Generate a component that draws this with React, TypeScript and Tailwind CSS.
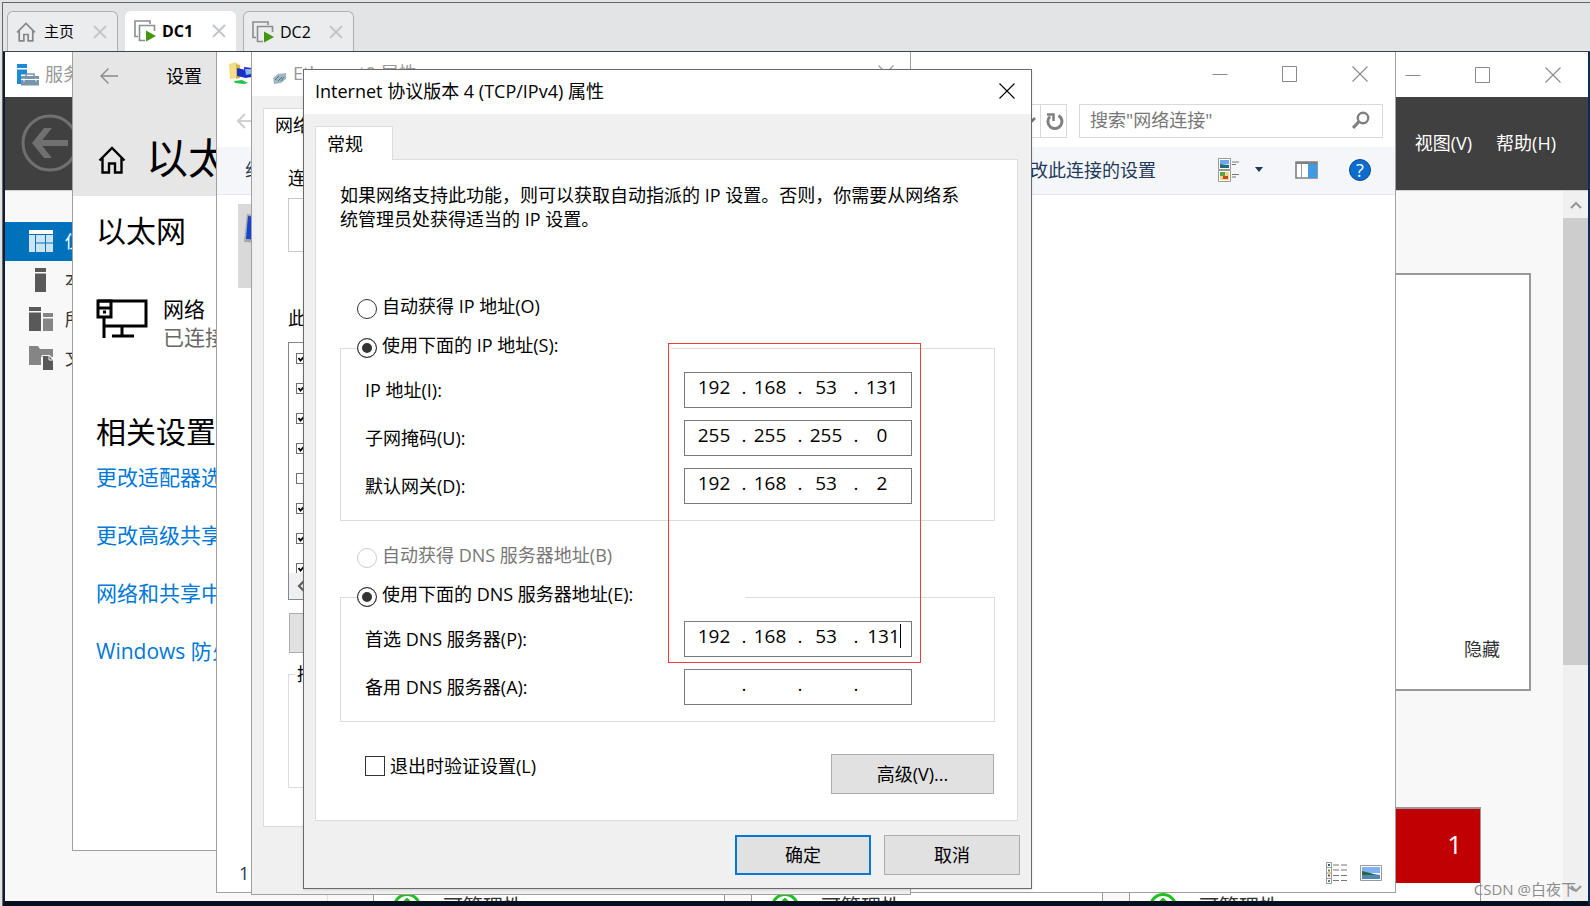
import React, { useState } from 'react';

const TABS = [
    { name: '主页', home: true },
    { name: 'DC1', active: true },
    { name: 'DC2' },
];

const SIDE_ITEMS = [
    { label: '仪表板', kind: 'dashboard' },
    { label: '本地服务器', kind: 'local' },
    { label: '所有服务器', kind: 'all' },
    { label: '文件和存储服务', kind: 'files' },
];

const SETTINGS_LINKS = ['更改适配器选项', '更改高级共享设置', '网络和共享中心', 'Windows 防火墙'];

const ROLE_TILES = [
    { id: 'adds', head: 'bg-white', count: '1' },
    { id: 'dns', head: 'bg-white', count: '1' },
    { id: 'local', head: 'bg-[#c00000]', count: '1' },
];

const ADAPTER_ITEMS = [true, true, true, true, false, true, true, true];

type IpRowProps = {
    id: string;
    label: string;
    value: string[];
    focused?: boolean;
};

function HomeIcon({ className }: { className: string }) {
    return (
        <svg viewBox="0 0 28 28" className={className} fill="none" stroke="currentColor" strokeWidth="2.4">
            <path d="M1.5 14.5 14 2l12.500 12.500M4.500 12v14.500H11v-9h6v9h6.500V12" />
        </svg>
    );
}

function CloseIcon({ className = 'size-4' }: { className?: string }) {
    return (
        <svg viewBox="0 0 16 16" className={className} fill="none" stroke="currentColor" strokeWidth="1.1">
            <path d="M.5.5l15 15M15.500.5l-15 15" />
        </svg>
    );
}

function VmIcon() {
    return (
        <svg viewBox="0 0 22 22" className="size-[22px]" fill="none">
            <path d="M4 16.500H1V1h15v3" stroke="#8b8e90" strokeWidth="1.6" />
            <path d="M11 20.500H5.500V5.500h15V11" stroke="#8b8e90" strokeWidth="1.6" />
            <path d="M12 10.500v11l10-5.500z" fill="#43960f" />
        </svg>
    );
}

function SideIcon({ kind }: { kind: string }) {
    return (
        <svg viewBox="0 0 24 24" className="size-6 shrink-0">
            {kind === 'dashboard' && (
                <>
                    <path d="M0 1h24v4H0z" fill="#fff" />
                    <path d="M0 6h6v17H0zM7 6h9v7.500H7zM17 6h7v7.500h-7zM7 14.500h9V23H7zM17 14.500h7V23h-7z" fill="#cce4f4" />
                </>
            )}
            {kind === 'local' && <path d="M6 0h11v4H6zM6 5.500h11V24H6z" fill="#595959" />}
            {kind === 'all' && (
                <>
                    <path d="M0 0h12v4H0zM0 5.500h12V24H0z" fill="#595959" />
                    <path d="M14 6h10v4H14zM14 11.500h10V24H14z" fill="#858585" />
                </>
            )}
            {kind === 'files' && (
                <>
                    <path d="M0 0h9l2 3h13v8H12v8H0z" fill="#858585" />
                    <path d="M14 10h6l4 4v10H14z" fill="#595959" />
                    <path d="M13 24V9.500h8l3 4M20 10v4h4" fill="none" stroke="#f8f8f8" />
                </>
            )}
        </svg>
    );
}

function WindowControls({ cell }: { cell: string }) {
    return (
        <div className="ml-auto flex h-full text-[#8a8a8a]">
            <button aria-label="最小化" className={`${cell} flex items-center justify-center`}>
                <svg viewBox="0 0 16 16" className="size-4"><path d="M.5 8.500h15" stroke="currentColor" /></svg>
            </button>
            <button aria-label="最大化" className={`${cell} flex items-center justify-center`}>
                <svg viewBox="0 0 16 16" className="size-4"><path d="M.5.5h14v15H.5z" fill="none" stroke="currentColor" /></svg>
            </button>
            <button aria-label="关闭" className={`${cell} flex items-center justify-center`}>
                <CloseIcon />
            </button>
        </div>
    );
}

function TabBar() {
    return (
        <nav className="flex h-[49px] shrink-0 items-end gap-[7px] border-b border-[#3c4650] bg-[#e3e4e6] pl-1">
            {TABS.map((tab) => (
                <div
                    key={tab.name}
                    className={`flex h-10 w-[111px] items-center rounded-t-md pr-2.5 text-base ${tab.active ? 'bg-white pl-[9px] font-bold' : 'border border-b-0 border-[#adb0b2] bg-[#ebecee] pl-2'}`}
                >
                    {tab.home ? <HomeIcon className="size-5 text-[#85888a]" /> : <VmIcon />}
                    <a href="#" className={tab.home ? 'ml-2 text-[15px]' : 'ml-1.5'}>{tab.name}</a>
                    <button aria-label={`关闭 ${tab.name}`} className="ml-auto text-[#c3c6c8]">
                        <svg viewBox="0 0 14 14" className="size-3.5" stroke="currentColor" strokeWidth="1.8">
                            <path d="M1 1l12 12M13 1 1 13" />
                        </svg>
                    </button>
                </div>
            ))}
        </nav>
    );
}

function ServerManager() {
    return (
        <section className="absolute inset-0 flex flex-col overflow-hidden bg-[#f8f8f8]">
            <header className="flex h-[45px] shrink-0 items-center bg-white pl-3">
                <svg viewBox="0 0 22 22" className="size-[22px]">
                    <path d="M0 0h10v4H0zM0 5.500h10v5H4V20H0z" fill="#1d8ad8" />
                    <path d="M9 12v-2h8v2" fill="none" stroke="#7795ab" strokeWidth="1.500" />
                    <path d="M4 12h18v9.500H4z" fill="#7795ab" />
                    <path d="M4 15.500h18M7 14.500v3M19 14.500v3" stroke="#fff" />
                </svg>
                <span className="ml-1.5 pb-0.5 text-[#999]">服务器管理器</span>
                <WindowControls cell="w-[70px]" />
            </header>
            <div className="flex h-[93px] shrink-0 items-center bg-[#404040] pr-8 pb-0.5 pl-4 text-white">
                <button aria-label="后退">
                    <svg viewBox="0 0 58 58" className="size-[58px]" fill="none" stroke="#707070">
                        <circle cx="29" cy="29" r="27" strokeWidth="3" />
                        <path d="M47 29H15" strokeWidth="6" />
                        <path d="M31 14h-8L11 29l12 15h8L19 29z" fill="#707070" stroke="none" />
                    </svg>
                </button>
                <a href="#" className="ml-auto">视图(V)</a>
                <a href="#" className="ml-6">帮助(H)</a>
            </div>
            <div className="flex min-h-0 flex-1 border-t border-[#d0d0d0]">
                <ul className="w-[323px] shrink-0 border-r border-[#e0e0e0] pt-[31px]">
                    {SIDE_ITEMS.map((item, i) => (
                        <li key={item.kind}>
                            <a href="#" className={`flex h-[39px] items-center pb-0.5 pl-6 ${i === 0 ? 'bg-[#0072bc] text-white' : 'text-[#333]'}`}>
                                <SideIcon kind={item.kind} />
                                <span className="ml-3">{item.label}</span>
                            </a>
                        </li>
                    ))}
                </ul>
                <main className="flex min-w-0 flex-1 flex-col pt-[82px] pl-[45px]">
                    <div className="mr-8 flex h-[418px] shrink-0 items-end justify-end border-2 border-[#999] bg-white pr-[29px] pb-7">
                        <a href="#" className="text-[#333]">隐藏</a>
                    </div>
                    <div className="mt-[116px] flex min-h-0 flex-1 gap-[26px] overflow-hidden">
                        {ROLE_TILES.map((tile) => (
                            <article key={tile.id} className="h-[200px] w-[352px] shrink-0 border border-t-2 border-[#999] bg-white">
                                <div className={`flex h-[74px] items-center justify-end pr-[18px] pb-1 text-[26px] text-white ${tile.head}`}>{tile.count}</div>
                                <div className="flex items-center pt-2.5 pl-[19px] text-xl text-[#333]">
                                    <svg viewBox="0 0 28 28" className="size-7" fill="none" stroke="#1fc01f" strokeWidth="3">
                                        <circle cx="14" cy="14" r="12.500" />
                                        <path d="M9 11.500l5-5 5 5M14 7v14" />
                                    </svg>
                                    <a href="#" className="ml-5.5">可管理性</a>
                                </div>
                            </article>
                        ))}
                    </div>
                </main>
                <div className="flex w-[25px] shrink-0 flex-col items-center bg-[#f0f0f0] text-[#999]">
                    <button aria-label="向上滚动" className="flex h-[27px] items-center">
                        <svg viewBox="0 0 12 8" className="h-2 w-3" fill="none" stroke="currentColor" strokeWidth="2.2"><path d="M1 7l5-5 5 5" /></svg>
                    </button>
                    <div className="h-[447px] w-full bg-[#cdcdcd]" />
                    <button aria-label="向下滚动" className="mt-auto flex h-6 items-center">
                        <svg viewBox="0 0 12 8" className="h-2 w-3" fill="none" stroke="currentColor" strokeWidth="2.2"><path d="M1 1l5 5 5-5" /></svg>
                    </button>
                </div>
            </div>
        </section>
    );
}

function SettingsWindow() {
    return (
        <section className="absolute top-0 left-[67px] h-[799px] w-[900px] border border-t-0 border-[#a0a0a0] bg-white text-black">
            <header className="h-36 bg-[#e6e6e6]">
                <div className="flex h-12 items-center pl-[27px]">
                    <button aria-label="返回" className="text-[#8a8a8a]">
                        <svg viewBox="0 0 18 16" className="h-4 w-[18px]" fill="none" stroke="currentColor" strokeWidth="1.3"><path d="M18 8H1M8.500.5 1 8l7.500 7.500" /></svg>
                    </button>
                    <span className="ml-12">设置</span>
                </div>
                <div className="flex items-center pt-7.5 pl-[25px]">
                    <HomeIcon className="size-7" />
                    <h1 className="ml-5 pb-1 text-[42px] leading-14">以太网</h1>
                </div>
            </header>
            <div className="pl-[23px]">
                <h2 className="pt-3.5 text-3xl leading-[42px]">以太网</h2>
                <div className="mt-[43px] flex items-start text-[21px] leading-7">
                    <svg viewBox="0 0 52 40" className="mt-1 h-10 w-[52px]" fill="none" stroke="#000" strokeWidth="3">
                        <path d="M2 2h48v25H9M26 27v9M16 37h22M8 18v21" />
                        <path d="M2 2h13v16H2zM2 9h13" />
                        <path d="M7 13h3" />
                    </svg>
                    <div className="ml-[15px]">
                        <p>网络</p>
                        <p className="text-[#666]">已连接</p>
                    </div>
                </div>
                <h2 className="mt-15 text-3xl leading-[42px]">相关设置</h2>
                <ul className="mt-[10px] flex flex-col gap-[30px] text-[21px] leading-7 text-[#0078d7]">
                    {SETTINGS_LINKS.map((link) => (
                        <li key={link}><a href="#">{link}</a></li>
                    ))}
                </ul>
            </div>
        </section>
    );
}

function NetworkConnections() {
    return (
        <section className="absolute top-0 right-[192px] bottom-2 left-[211px] flex flex-col border border-t-0 border-[#a0a0a0] bg-white">
            <header className="flex h-[43px] shrink-0 items-center pl-[11px]">
                <svg viewBox="0 0 24 24" className="size-6">
                    <path d="M1 2l7-2 2 2v14l-8 1z" fill="#f3dc8a" />
                    <path d="M8 2l4 1v13l-4 1z" fill="#d9b64d" />
                    <path d="M9 6l9 2v8L9 14zM16 5l8 1v9l-7 1z" fill="#1930c8" />
                    <path d="M17 7l6 0v5l-5 1z" fill="#8db4f5" />
                    <path d="M6 19l8-1 6 3-4 1-9-1z" fill="#27c24c" />
                </svg>
                <WindowControls cell="w-[70px]" />
            </header>
            <div className="mt-[9px] flex h-[34px] shrink-0 gap-3 pr-3 pl-[19px] text-[#777]">
                <button aria-label="后退" className="text-[#d0d0d0]">
                    <svg viewBox="0 0 18 16" className="h-4 w-[18px]" fill="none" stroke="currentColor" strokeWidth="2.2"><path d="M18 8H2M9 1 2 8l7 7" /></svg>
                </button>
                <div className="flex flex-1 items-center justify-end border border-[#d9d9d9]">
                    <svg viewBox="0 0 12 8" className="mr-1 h-2 w-3" fill="none" stroke="currentColor" strokeWidth="2.5"><path d="M1 1l5 5 5-5" /></svg>
                    <button aria-label="刷新" className="flex h-full w-[26px] items-center justify-center border-l border-[#d9d9d9] pl-0.5 text-[#808080]">
                        <svg viewBox="0 0 18 18" className="size-[18px]" fill="none" stroke="currentColor" strokeWidth="3">
                            <path d="M12.500 3.500a7 7 0 1 1-8.500 1" />
                            <path d="M1 2.500h6.500V9" strokeWidth="2.500" />
                        </svg>
                    </button>
                </div>
                <div className="flex w-[304px] items-center border border-[#d9d9d9] pr-3 pb-0.5 pl-2.5">
                    <input aria-label="搜索" placeholder='搜索"网络连接"' className="min-w-0 flex-1 outline-none placeholder:text-[#777]" />
                    <svg viewBox="0 0 18 18" className="size-[18px]" fill="none" stroke="#808080">
                        <circle cx="11" cy="7" r="5.200" strokeWidth="2.400" />
                        <path d="M7 10.500 1 17" strokeWidth="3.200" />
                    </svg>
                </div>
            </div>
            <div className="mt-[9px] flex h-12 shrink-0 items-center border-b border-[#e4e7eb] bg-[#f4f6f9] pr-6 pb-0.5 pl-7 text-[#1e395b]">
                <a href="#">组织</a>
                <a href="#" className="ml-auto">更改此连接的设置</a>
                <button aria-label="更改视图" className="ml-[62px] flex items-center">
                    <svg viewBox="0 0 21 24" className="h-6 w-[21px]" fill="none">
                        <path d="M.5.5h12v11H.5zM.5 12.500h12v11H.5z" fill="#fff" stroke="#999" />
                        <path d="M2 2h9v4H2z" fill="#69a9ee" />
                        <path d="M2 6l9 1v3H2z" fill="#256a7a" />
                        <path d="M2 14h9v8H2z" fill="#f6d77b" />
                        <path d="M2 14h5v4H2z" fill="#5ba54c" />
                        <path d="M5 18h5v3H5z" fill="#c8462f" />
                        <path d="M14 4h7M14 6.500h4M14 16.500h7M14 19h4" stroke="#777" />
                    </svg>
                    <svg viewBox="0 0 8 5" className="ml-4 h-[5px] w-2"><path d="M0 0h8L4 5z" fill="#1e395b" /></svg>
                </button>
                <button aria-label="预览窗格" className="ml-8">
                    <svg viewBox="0 0 23 18" className="h-[18px] w-[23px]">
                        <path d="M1 1h21v16H1z" fill="#fff" stroke="#808080" strokeWidth="1.600" />
                        <path d="M1 2h21" stroke="#808080" strokeWidth="2" />
                        <path d="M6.500 3v14" stroke="#999" />
                        <path d="M13 3h9v14h-9z" fill="#3f9be3" />
                    </svg>
                </button>
                <button aria-label="帮助" className="ml-[31px] flex size-[22px] items-center justify-center rounded-full border border-[#0a4a8c] bg-[#0a6cce] leading-5 text-white">?</button>
            </div>
            <div className="mt-[9px] ml-[21px] h-[84px] w-[300px] bg-[#d9d9d9] pt-2.5 pl-1.5">
                <svg viewBox="0 0 32 32" className="size-8">
                    <path d="M3 0l26 3v27L0 28z" fill="#a8a8a8" />
                    <path d="M4 2l23 3v21L2 25z" fill="#1545d0" />
                </svg>
            </div>
            <footer className="mt-auto flex h-9 items-center pr-[13px] pb-0.5 pl-[22px] text-[#1e395b]">
                <span>1 个项目</span>
                <button aria-label="详细信息" className="ml-auto">
                    <svg viewBox="0 0 22 22" className="size-[22px]" fill="none" stroke="#999">
                        <path d="M.5.5h5v21h-5zM.5 5.500h5M.5 11h5M.5 16.500h5" />
                        <path d="M7 3h6M15 3h6M7 8h6M15 8h6M7 13.500h6M15 13.500h6M7 18.500h6M15 18.500h6" stroke="#777" />
                        <path d="M2 3h2" stroke="#25617a" strokeWidth="2" />
                        <path d="M2 8.500h2" stroke="#7a8a20" strokeWidth="2" />
                        <path d="M2 13.500h2" stroke="#b04010" strokeWidth="2" />
                        <path d="M2 19h2" stroke="#5d86a0" strokeWidth="2" />
                    </svg>
                </button>
                <button aria-label="大图标" className="ml-3">
                    <svg viewBox="0 0 22 16" className="h-4 w-[22px]">
                        <path d="M.5.5h21v15H.5z" fill="#fff" stroke="#999" />
                        <path d="M2 2h18v6H2z" fill="#7fb2f2" />
                        <path d="M2 7l6 1 12 2v4H2z" fill="#4f86b8" />
                        <path d="M2 6l8 2 6 2H2z" fill="#2c6640" />
                    </svg>
                </button>
            </footer>
        </section>
    );
}

function EthernetProperties() {
    return (
        <section className="absolute top-0 left-[246px] flex h-[843px] w-[660px] flex-col border border-t-0 border-[#a0a0a0] bg-[#f0f0f0]">
            <header className="flex h-11 shrink-0 items-center bg-white pr-4 pb-0.5 pl-[21px] text-[#999]">
                <svg viewBox="0 0 14 12" className="mt-2.5 h-3 w-3.5">
                    <path d="M0 6l5-4 8-1v6l-5 4-7 1z" fill="#9fb8c4" />
                    <path d="M2 8l4-4M5 9l4-4M8 9l3-4" stroke="#4f6f80" />
                </svg>
                <span className="ml-1.5">Ethernet0 属性</span>
                <button aria-label="关闭属性" className="ml-auto"><CloseIcon /></button>
            </header>
            <div className="flex flex-col pt-3 pr-3 pl-[11px]">
                <div className="h-[34px] w-16 border border-b-0 border-[#dcdcdc] bg-white pt-1 pl-[11px]">网络</div>
                <div className="h-[685px] border border-t-0 border-[#dcdcdc] bg-white pt-6 pl-6">
                    <p>连接时使用:</p>
                    <div className="mt-2 h-[54px] border border-[#c8c8c8]" />
                    <p className="mt-[54px]">此连接使用下列项目:</p>
                    <div className="mt-3 flex h-[258px] flex-col border border-[#828790]">
                        <div className="flex flex-1 flex-col gap-[19px] overflow-hidden pt-2.5 pl-[7px]">
                            {ADAPTER_ITEMS.map((checked, i) => (
                                <span key={i} className="relative flex">
                                    <input type="checkbox" aria-label={`项目 ${i + 1}`} defaultChecked={checked} className="peer size-[11px] shrink-0 appearance-none border border-[#707070]" />
                                    <svg viewBox="0 0 11 11" className="absolute hidden size-[11px] peer-checked:block" fill="none" stroke="#000" strokeWidth="1.800"><path d="M2.500 5l2 2.500L8.500 3" /></svg>
                                </span>
                            ))}
                        </div>
                        <div className="flex h-[26px] items-center bg-[#f0f0f0] pl-2">
                            <svg viewBox="0 0 8 12" className="h-3 w-2" fill="none" stroke="#606060" strokeWidth="2.200"><path d="M7 1 2 6l5 5" /></svg>
                        </div>
                    </div>
                    <button className="mt-[13px] ml-px block h-10 w-40 border border-[#adadad] bg-[#e1e1e1]">安装</button>
                    <fieldset className="mt-[9px] h-[126px] border border-[#dcdcdc] pl-1.5">
                        <legend className="px-0.5">描述</legend>
                    </fieldset>
                </div>
            </div>
        </section>
    );
}

function IpRow({ id, label, value, focused }: IpRowProps) {
    return (
        <div className="flex h-9 items-center justify-between pr-[82px] pl-6">
            <label htmlFor={`${id}-0`}>{label}</label>
            <div className="flex h-9 w-[228px] border border-[#7a7a7a] bg-white pl-1.5 text-[19px] leading-7">
                {value.map((octet, i) => (
                    <React.Fragment key={i}>
                        {i > 0 && <span className="w-1.5 text-center">.</span>}
                        <span className="flex h-7 w-[50px] items-center justify-center pr-1">
                            <input id={`${id}-${i}`} aria-label={`${label} ${i + 1}`} defaultValue={octet} className="h-7 w-9 text-center outline-none" />
                            {focused && i === 3 && <span className="-mx-0.5 h-6 w-px bg-black" />}
                        </span>
                    </React.Fragment>
                ))}
            </div>
        </div>
    );
}

type ModeRadioProps = {
    group: string;
    label: string;
    checked: boolean;
    disabled?: boolean;
    onPick: () => void;
};

function ModeRadio({ group, label, checked, disabled, onPick }: ModeRadioProps) {
    return (
        <label className={`flex h-5 items-center gap-[5px] ${disabled ? 'text-[#777]' : ''}`}>
            <input
                type="radio"
                name={group}
                checked={checked}
                disabled={disabled}
                onChange={onPick}
                className="size-5 appearance-none rounded-full border border-[#333] bg-white checked:bg-[#333] checked:shadow-[inset_0_0_0_4px_#fff] disabled:border-[#ccc]"
            />
            <span className="pb-1.5 leading-[14px]">{label}</span>
        </label>
    );
}

function TcpIpDialog() {
    const [manualIp, setManualIp] = useState(true);

    return (
        <section className="absolute top-[17px] left-[298px] w-[729px] border border-[#6a6a6a] bg-[#f0f0f0] shadow-sm">
            <header className="flex h-11 items-center bg-white pr-4 pb-0.5 pl-[11px]">
                <h2>Internet 协议版本 4 (TCP/IPv4) 属性</h2>
                <button aria-label="关闭对话框" className="ml-auto"><CloseIcon /></button>
            </header>
            <div className="pt-3 pr-[13px] pl-[11px]">
                <button className="relative -mb-px block h-[34px] w-[78px] border border-b-0 border-[#dcdcdc] bg-white pl-[11px] text-left">常规</button>
                <div className="border border-[#dcdcdc] bg-white pt-[23px] pr-[22px] pb-[26px] pl-6">
                    <p className="max-w-[630px] leading-6">
                        如果网络支持此功能，则可以获取自动指派的 IP 设置。否则，你需要从网络系统管理员处获得适当的 IP 设置。
                    </p>
                    <div className="mt-17 pl-[17px]">
                        <ModeRadio group="ip" label="自动获得 IP 地址(O)" checked={!manualIp} onPick={() => setManualIp(false)} />
                    </div>
                    <fieldset className="mt-[19px] border border-[#dcdcdc] pb-4 pl-4">
                        <legend className="w-[314px]">
                            <ModeRadio group="ip" label="使用下面的 IP 地址(S):" checked={manualIp} onPick={() => setManualIp(true)} />
                        </legend>
                        <div className="-ml-4 flex flex-col gap-3 pt-3.5">
                            <IpRow id="ip" label="IP 地址(I):" value={['192', '168', '53', '131']} />
                            <IpRow id="mask" label="子网掩码(U):" value={['255', '255', '255', '0']} />
                            <IpRow id="gateway" label="默认网关(D):" value={['192', '168', '53', '2']} />
                        </div>
                    </fieldset>
                    <div className="mt-[27px] pl-[17px]">
                        <ModeRadio group="dns" label="自动获得 DNS 服务器地址(B)" checked={false} disabled onPick={() => {}} />
                    </div>
                    <fieldset className="mt-[19px] border border-[#dcdcdc] pb-4 pl-4">
                        <legend className="w-[388px]">
                            <ModeRadio group="dns" label="使用下面的 DNS 服务器地址(E):" checked onPick={() => {}} />
                        </legend>
                        <div className="-ml-4 flex flex-col gap-3 pt-3.5">
                            <IpRow id="dns1" label="首选 DNS 服务器(P):" value={['192', '168', '53', '131']} focused />
                            <IpRow id="dns2" label="备用 DNS 服务器(A):" value={['', '', '', '']} />
                        </div>
                    </fieldset>
                    <div className="mt-8 flex items-start justify-between pr-px pl-[25px]">
                        <label className="flex items-center gap-[5px] pt-0.5 leading-5">
                            <input type="checkbox" className="size-5 appearance-none border border-[#333] bg-white" />
                            退出时验证设置(L)
                        </label>
                        <button className="h-10 w-[163px] border border-[#adadad] bg-[#e1e1e1]">高级(V)...</button>
                    </div>
                </div>
            </div>
            <footer className="flex justify-end gap-[13px] pt-3.5 pr-[11px] pb-[13px]">
                <button className="h-10 w-[136px] border-2 border-[#0078d7] bg-[#e1e1e1]">确定</button>
                <button className="h-10 w-[136px] border border-[#adadad] bg-[#e1e1e1]">取消</button>
            </footer>
            {/* highlight around the address fields */}
            <div className="pointer-events-none absolute top-[273px] left-[364px] h-80 w-[253px] border border-[#f53b3b]" />
        </section>
    );
}

export default function App() {
    return (
        <div className="flex h-screen flex-col overflow-hidden bg-[#e3e4e6] pt-0.5 pl-0.5 font-['Open_Sans','Noto_Sans_CJK_SC',sans-serif] text-lg leading-6 text-black">
            <div className="flex min-h-0 flex-1 flex-col border-t border-l border-[#666]">
                <TabBar />
                <div className="relative min-h-0 flex-1 overflow-hidden border-r-2 border-b-[5px] border-l-2 border-r-[#0a2d55] border-b-[#04101f] border-l-[#0f1d30]">
                    <ServerManager />
                    <SettingsWindow />
                    <NetworkConnections />
                    <EthernetProperties />
                    <TcpIpDialog />
                    <span className="absolute right-3 bottom-0 text-[15px] text-[#8c8c8c]">CSDN @白夜下</span>
                </div>
            </div>
        </div>
    );
}
